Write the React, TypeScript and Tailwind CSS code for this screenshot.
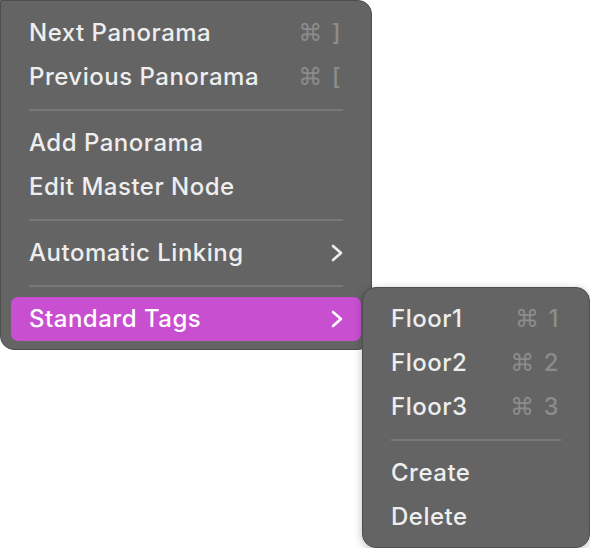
const FONT = "font-['Inter','Liberation_Sans',sans-serif]";

function Chevron() {
  return (
    <svg width="12" height="20" viewBox="0 0 12 20" className="shrink-0">
      <path d="M2 3 L10 10 L2 17" fill="none" stroke="currentColor" strokeWidth="2.6" strokeLinecap="round" strokeLinejoin="round" />
    </svg>
  );
}

function Shortcut({ k }: { k: string }) {
  return (
    <span className="mr-[2px] flex items-center gap-[9px] text-[#8c8c8c]">
      <span className="font-['DejaVu_Sans',sans-serif] text-[24px] font-normal">⌘</span>
      <span>{k}</span>
    </span>
  );
}

function Item({
  label,
  shortcut,
  sub,
  active,
}: {
  label: string;
  shortcut?: string;
  sub?: boolean;
  active?: boolean;
}) {
  return (
    <div
      className={`flex h-[44px] items-center justify-between rounded-[7px] px-[18px] ${
        active ? "bg-[#c94fd1] text-white" : "text-[#eeeeee]"
      }`}
    >
      <span>{label}</span>
      {shortcut && <Shortcut k={shortcut} />}
      {sub && <Chevron />}
    </div>
  );
}

function Sep() {
  return (
    <div className="flex h-[22px] items-center px-[18px]">
      <div className="h-[2px] w-full bg-[#787878]" />
    </div>
  );
}

export default function App() {
  return (
    <div className={`relative h-[548px] w-[590px] bg-white ${FONT} text-[24px] font-medium tracking-[0.5px] leading-none`}>
      <div className="absolute left-0 top-0 w-[372px] rounded-b-[14px] rounded-tr-[14px] border border-[#4e4e4e] bg-[#646464] px-[10px] pb-[8px] pt-[10px]">
        <Item label="Next Panorama" shortcut="]" />
        <Item label="Previous Panorama" shortcut="[" />
        <Sep />
        <Item label="Add Panorama" />
        <Item label="Edit Master Node" />
        <Sep />
        <Item label="Automatic Linking" sub />
        <Sep />
        <Item label="Standard Tags" sub active />
      </div>
      <div className="absolute left-[362px] top-[287px] w-[228px] rounded-[14px] border border-[#4e4e4e] bg-[#646464] px-[10px] pb-[8px] pt-[9px] shadow-[0_2px_8px_rgba(0,0,0,0.25)]">
        <Item label="Floor1" shortcut="1" />
        <Item label="Floor2" shortcut="2" />
        <Item label="Floor3" shortcut="3" />
        <Sep />
        <Item label="Create" />
        <Item label="Delete" />
      </div>
    </div>
  );
}
